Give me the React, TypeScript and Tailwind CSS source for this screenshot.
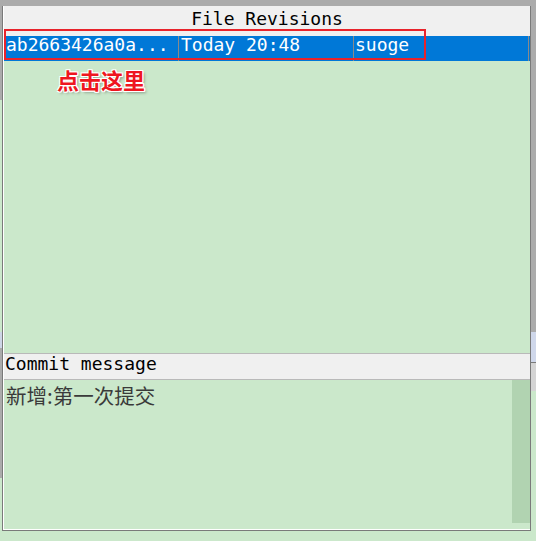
import React from "react";

const mono = { fontFamily: '"DejaVu Sans Mono", "Liberation Mono", monospace' };
const cjk = { fontFamily: '"Noto Sans CJK SC", "Noto Sans", sans-serif' };

export default function App() {
  return (
    <div className="relative w-[536px] h-[541px] flex flex-col bg-[#cbe8cb] overflow-hidden">
      <div className="h-[6px] w-full bg-[#ababab] shrink-0" />
      <div className="flex h-[525px] shrink-0">
        <div className="w-[2px] flex flex-col shrink-0">
          <div className="h-[94px] bg-[#ababab]" />
          <div className="h-[232px] bg-[#cbe8cb]" />
          <div className="h-[16px] bg-[#cdd5e6]" />
          <div className="h-[130px] bg-[#ababab]" />
          <div className="flex-1 bg-[#cbe8cb]" />
        </div>
        <div className="w-[529px] h-[525px] border-l border-r border-b border-[#7a7a7a] flex flex-col shrink-0">
          <div className="flex-1 border-l border-b border-white flex flex-col min-h-0">
            <div
              className="h-[30px] bg-[#f0f0f0] text-black text-[18px] leading-[26px] text-center shrink-0"
              style={mono}
            >
              File Revisions
            </div>
            <div className="h-[25px] bg-[#0078d7] flex text-white text-[18px] leading-[17px] shrink-0" style={mono}>
              <div className="w-[175px] h-full border-r border-[#8a8a8a] pl-[2px] whitespace-pre">ab2663426a0a...</div>
              <div className="w-[175px] h-full border-r border-[#8a8a8a] pl-[2px] whitespace-pre">Today 20:48</div>
              <div className="w-[175px] h-full border-r border-[#8a8a8a] pl-[1px] whitespace-pre">suoge</div>
            </div>
            <div className="h-[292px] bg-[#cbe8cb] shrink-0" />
            <div
              className="h-[27px] border-t border-b border-[#b9b9b9] bg-[#f0f0f0] text-black text-[18px] leading-[19px] pl-[1px] shrink-0"
              style={mono}
            >
              Commit message
            </div>
            <div className="flex-1 flex bg-[#cbe8cb] min-h-0">
              <div className="flex-1 pl-[2px] pt-[3px] text-[20.5px] leading-[24px] text-[#3a3a3a]" style={cjk}>
                新增:第一次提交
              </div>
              <div className="w-[18px] flex flex-col pb-[6px]">
                <div className="flex-1 bg-[#b1d3b1]" />
              </div>
            </div>
          </div>
        </div>
        <div className="w-[5px] flex flex-col shrink-0">
          <div className="h-[326px] bg-[#ababab]" />
          <div className="h-[30px] bg-[#cfd7ea]" />
          <div className="h-[1px] bg-[#7a7a7a]" />
          <div className="h-[28px] bg-[#d4d4d4]" />
          <div className="flex-1 bg-[#cbe8cb]" />
        </div>
      </div>
      <div className="flex-1 bg-[#cbe8cb]" />

      <div className="absolute left-[4px] top-[29px] w-[422px] h-[31px] border-2 border-[#e8232b]" />
      <div
        className="absolute left-[57px] top-[67px] text-[22px] leading-[24px] font-bold text-[#ee1620] [text-shadow:1px_1px_0_#fff,-1px_-1px_0_#fff,1px_-1px_0_#fff,-1px_1px_0_#fff,0_1px_0_#fff,1px_0_0_#fff,2px_2px_3px_rgba(0,0,0,0.35)]"
        style={cjk}
      >
        点击这里
      </div>
    </div>
  );
}
